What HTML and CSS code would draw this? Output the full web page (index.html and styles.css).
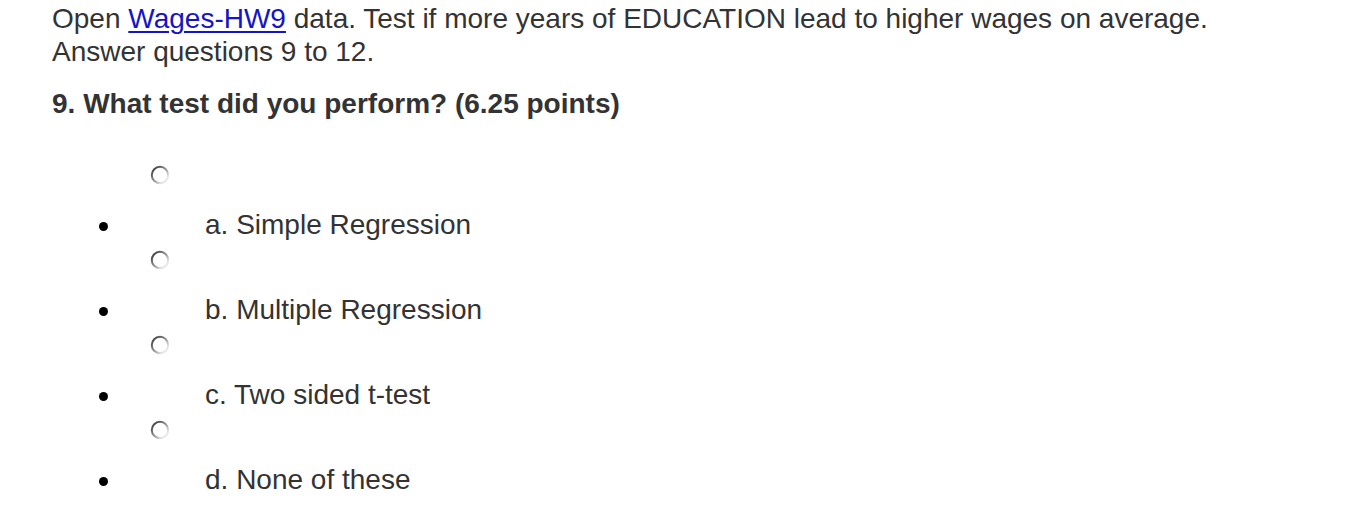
FILE: index.html
```html
<!DOCTYPE html>
<html lang="en">
<head>
<meta charset="utf-8">
<title>Question 9</title>
<link rel="stylesheet" href="styles.css">
</head>
<body>
<div class="page">
  <p class="intro">Open <a href="#" class="link">Wages-HW9</a> data. Test if more years of EDUCATION lead to higher wages on average.<br>Answer questions 9 to 12.</p>
  <h2 class="question">9. What test did you perform? (6.25 points)</h2>
  <ul class="options">
    <li class="option">
      <div class="radio-row"><svg class="radio" width="20" height="20" viewBox="0 0 20 20"><defs><linearGradient id="rg" x1="0" y1="0" x2="1" y2="1"><stop offset="0.15" stop-color="#4a4a4a"/><stop offset="0.55" stop-color="#a0a0a0"/><stop offset="0.8" stop-color="#e8e8e8"/></linearGradient></defs><circle cx="10" cy="10" r="8.2" fill="#fff" stroke="url(#rg)" stroke-width="2"/></svg></div>
      <div class="label-row"><span class="bullet"></span><span class="label">a. Simple Regression</span></div>
    </li>
    <li class="option">
      <div class="radio-row"><svg class="radio" width="20" height="20" viewBox="0 0 20 20"><circle cx="10" cy="10" r="8.2" fill="#fff" stroke="url(#rg)" stroke-width="2"/></svg></div>
      <div class="label-row"><span class="bullet"></span><span class="label">b. Multiple Regression</span></div>
    </li>
    <li class="option">
      <div class="radio-row"><svg class="radio" width="20" height="20" viewBox="0 0 20 20"><circle cx="10" cy="10" r="8.2" fill="#fff" stroke="url(#rg)" stroke-width="2"/></svg></div>
      <div class="label-row"><span class="bullet"></span><span class="label">c. Two sided t-test</span></div>
    </li>
    <li class="option">
      <div class="radio-row"><svg class="radio" width="20" height="20" viewBox="0 0 20 20"><circle cx="10" cy="10" r="8.2" fill="#fff" stroke="url(#rg)" stroke-width="2"/></svg></div>
      <div class="label-row"><span class="bullet"></span><span class="label">d. None of these</span></div>
    </li>
  </ul>
</div>
</body>
</html>
```
FILE: styles.css
```css
html, body {
  margin: 0;
  padding: 0;
  background: #fff;
}
body {
  font-family: "Liberation Sans", Arial, sans-serif;
  color: #333;
}
.page {
  padding: 2px 0 0 52px;
}
.intro {
  margin: 0;
  font-size: 28px;
  line-height: 33px;
}
.link {
  color: #1515c8;
  text-decoration: underline;
  text-decoration-thickness: 1.5px;
  text-underline-offset: 3px;
}
.question {
  margin: 19px 0 0 0;
  font-size: 28px;
  line-height: 33px;
  font-weight: bold;
}
.options {
  list-style: none;
  margin: 35px 0 0 0;
  padding: 0;
}
.option {
  padding-top: 10px;
}
.radio-row {
  height: 20px;
  padding-left: 98px;
}
.radio {
  display: block;
}
.label-row {
  margin-top: 24px;
  height: 31px;
  display: flex;
  align-items: center;
  font-size: 28px;
  line-height: 32px;
}
.bullet {
  width: 9px;
  height: 9px;
  border-radius: 50%;
  background: #000;
  margin: 3px 0 0 47px;
  flex: none;
}
.label {
  margin-left: 97px;
}
```
